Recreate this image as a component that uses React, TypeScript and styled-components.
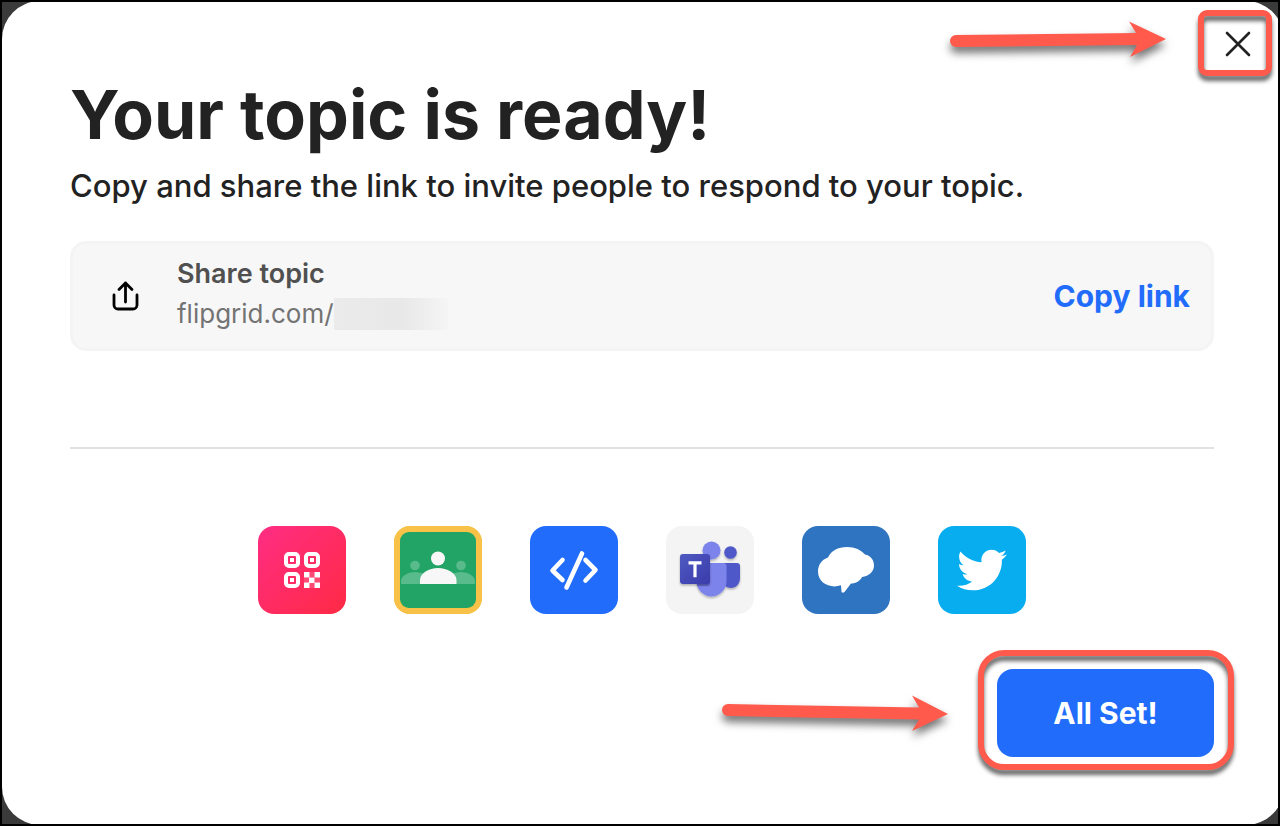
import React from "react";
import styled, { createGlobalStyle } from "styled-components";
import { FaTwitter } from "react-icons/fa";

const GlobalStyle = createGlobalStyle`
  *, *::before, *::after { box-sizing: border-box; }
  body {
    margin: 0;
    background: #000;
    color: #222;
    font-family: Inter, "Open Sans", sans-serif;
  }
  button { font-family: inherit; cursor: pointer; }
`;

const CORAL = "#ff5a4c";
const BLUE = "#216cfb";

const Frame = styled.div`
  display: flex;
  min-height: 100vh;
  overflow: hidden;
  border: 2px solid #000;
  background: #3a3a3a;
`;

const Dialog = styled.main`
  flex: 1;
  display: flex;
  flex-direction: column;
  margin: -1px -6px -1px 0;
  border-radius: 38px;
  background: #fff;
`;

const TopBar = styled.header`
  display: flex;
  justify-content: flex-end;
  align-items: flex-start;
  gap: 31px;
  padding: 9px 12px 0 0;
`;

const Callout = styled.div<{ $radius: number; $pad: string }>`
  position: relative;
  display: flex;
  padding: ${(p) => p.$pad};

  &::before {
    content: "";
    position: absolute;
    inset: 0;
    border: 6px solid ${CORAL};
    border-radius: ${(p) => p.$radius}px;
    filter: drop-shadow(0 5px 2px rgba(0, 0, 0, 0.6));
    pointer-events: none;
  }
`;

const ArrowSvg = styled.svg`
  flex: none;
  overflow: visible;
  filter: drop-shadow(0 6px 4px rgba(0, 0, 0, 0.55));
`;

const CloseButton = styled.button`
  display: grid;
  place-items: center;
  width: 48px;
  height: 48px;
  padding: 0;
  border: 0;
  background: transparent;
`;

const Intro = styled.section`
  padding: 0 70px 0 68px;
`;

const Title = styled.h1`
  margin: 0;
  font-size: 68px;
  line-height: 76px;
  font-weight: 700;
`;

const Subtitle = styled.p`
  margin: 14px 0 0;
  font-size: 31px;
  line-height: 40px;
  font-weight: 500;
`;

const ShareRow = styled.section`
  display: flex;
  align-items: center;
  min-height: 110px;
  margin: 35px 70px 0 68px;
  padding: 0 21px 0 38px;
  border: 3px solid #f4f4f4;
  border-radius: 16px;
  background: #f7f7f7;
`;

const ShareText = styled.div`
  flex: 1;
  margin-left: 36px;
  padding-bottom: 4px;
`;

const ShareTitle = styled.h2`
  margin: 0;
  font-size: 27px;
  line-height: 40px;
  font-weight: 600;
  color: #505050;
`;

const ShareUrl = styled.div`
  display: flex;
  align-items: center;
  font-size: 26px;
  line-height: 40px;
  color: #737373;
`;

const Redaction = styled.span`
  width: 114px;
  height: 32px;
  margin-left: -15px;
  background: linear-gradient(90deg, #ebebeb, #e8e8e8 60%, #f5f5f5);
`;

const CopyButton = styled.button`
  padding: 0;
  border: 0;
  background: transparent;
  color: ${BLUE};
  font-size: 30px;
  line-height: 40px;
  font-weight: 700;
`;

const Divider = styled.hr`
  align-self: stretch;
  height: 2px;
  margin: 96px 70px 0 68px;
  border: 0;
  background: #e1e1e1;
`;

const AppList = styled.nav`
  display: flex;
  flex-wrap: wrap;
  justify-content: center;
  gap: 48px;
  padding: 77px 70px 0 68px;
`;

const AppButton = styled.button<{ $bg: string }>`
  display: grid;
  place-items: center;
  width: 88px;
  height: 88px;
  padding: 0;
  border: 0;
  border-radius: 16px;
  background: ${(p) => p.$bg};
  color: #fff;
`;

const Footer = styled.footer`
  display: flex;
  justify-content: flex-end;
  align-items: flex-start;
  gap: 30px;
  padding: 36px 50px 48px;
`;

const DoneButton = styled.button`
  min-width: 217px;
  height: 88px;
  border: 0;
  border-radius: 16px;
  background: ${BLUE};
  color: #fff;
  font-size: 30px;
  font-weight: 700;
`;

function ArrowTop() {
  return (
    <ArrowSvg width="218" height="60" viewBox="0 0 218 60" aria-hidden="true">
      <path
        fill={CORAL}
        d="M7 25 L187 23 L180 11.500 L217 29 L181 47 L188 35 L7 37 A6 6 0 0 1 7 25Z"
      />
    </ArrowSvg>
  );
}

function ArrowBottom() {
  return (
    <ArrowSvg width="227" height="90" viewBox="0 0 227 90" aria-hidden="true">
      <path
        fill={CORAL}
        d="M7 54 L198 57.500 L191 45.500 L227 64 L191 81 L198 69.500 L7 66 A6 6 0 0 1 7 54Z"
      />
    </ArrowSvg>
  );
}

function ShareIcon() {
  return (
    <svg width="30" height="34" viewBox="0 0 30 34" fill="none" stroke="#000" strokeWidth="2.800" strokeLinecap="round" strokeLinejoin="round" aria-hidden="true">
      <path d="M3 16v10a4 4 0 0 0 4 4h15a4 4 0 0 0 4-4V16M14.500 23V4M8 10.500 14.500 4l6.500 6.500" />
    </svg>
  );
}

function QrIcon() {
  const rings = [[2, 2], [22, 2], [2, 22]];
  const cells = [[20, 20], [30.500, 20], [25, 25.500], [20, 30.500], [30.500, 30.500]];
  return (
    <svg width="36" height="36" viewBox="0 0 36 36" fill="none" aria-hidden="true">
      {rings.map(([x, y]) => (
        <rect key={`${x}-${y}`} x={x} y={y} width="12" height="12" rx="3" stroke="#fff" strokeWidth="4" />
      ))}
      {rings.map(([x, y]) => (
        <rect key={`${x}-${y}-dot`} x={x + 4} y={y + 4} width="4" height="4" fill="#fff" />
      ))}
      {cells.map(([x, y]) => (
        <rect key={`${x}-${y}-cell`} x={x} y={y} width="5.500" height="5.500" fill="#fff" />
      ))}
      <path d="M25.500 20h5v5.500h-5zM20 25.500h5v5h-5zM30.500 25.500H36v5h-5.500zM25.500 30.500h5V36h-5z" fill="#fff" opacity=".15" />
    </svg>
  );
}

function ClassroomIcon() {
  return (
    <svg width="88" height="88" viewBox="0 0 88 88" aria-hidden="true">
      <rect width="88" height="88" rx="16" fill="#f8c248" />
      <rect x="6" y="6" width="76" height="76" rx="9" fill="#21a465" />
      <g fill="#59bb8b">
        <circle cx="21" cy="39.500" r="4.800" />
        <circle cx="67" cy="39.500" r="4.800" />
        <path d="M7 58v-3c0-5 7-9 14-9s14 4 14 9v3zM53 58v-3c0-5 7-9 14-9s14 4 14 9v3z" />
      </g>
      <g fill="#f7f7f7">
        <circle cx="44" cy="32.500" r="7" />
        <path d="M26 58v-4c0-7 9-12 18-12s18.500 5 18.500 12v4z" />
      </g>
    </svg>
  );
}

function CodeIcon() {
  return (
    <svg width="88" height="88" viewBox="0 0 88 88" fill="none" stroke="#fff" strokeWidth="4.600" strokeLinecap="round" strokeLinejoin="round" aria-hidden="true">
      <path d="M32.500 34 22.500 44.500l10 9.500M55.500 34l10 10-10 10.500M52 27.500 36.500 61.500" />
    </svg>
  );
}

function TeamsIcon() {
  return (
    <svg width="88" height="88" viewBox="0 0 88 88" aria-hidden="true">
      <defs>
        <linearGradient id="teams-tile" x1="0" y1="0" x2="1" y2="1">
          <stop offset="0" stopColor="#5059c1" />
          <stop offset="1" stopColor="#393bab" />
        </linearGradient>
        <filter id="teams-shadow" x="-20%" y="-20%" width="140%" height="150%">
          <feDropShadow dx="0" dy="1.500" stdDeviation="1.200" floodOpacity=".3" />
        </filter>
      </defs>
      <g filter="url(#teams-shadow)">
        <circle cx="64.500" cy="26.500" r="6.300" fill="#5059c9" />
        <path d="M58 37h13a3 3 0 0 1 3 3v12c0 6-4 10-9 10s-8-3-9-8z" fill="#5059c9" />
        <circle cx="45.500" cy="24.500" r="9" fill="#7b83eb" />
        <path d="M32 37h26a3 3 0 0 1 2.500 3v15.500c0 8-7 15-15 15s-15-7-15-15V40z" fill="#7b83eb" />
      </g>
      <path d="M33 33h11v24a3 3 0 0 1-3 3H31z" fill="#4a50b8" opacity=".45" />
      <g filter="url(#teams-shadow)">
        <rect x="14" y="28" width="30" height="30" rx="3" fill="url(#teams-tile)" />
      </g>
      <path d="M22.500 36.800h13M29 36.800v14.500" fill="none" stroke="#fff" strokeWidth="3.200" />
    </svg>
  );
}

function BubbleIcon() {
  return (
    <svg width="88" height="88" viewBox="0 0 88 88" fill="#fff" aria-hidden="true">
      <path d="M26 31.500C29 25 36 21 45 21c8 0 14 3 18 7.500 5.500 1 9 5.500 9 11 0 6-5 10.500-12 11.500-2 4-6 6.500-11 6.500l-6.500 8.500c-1 1-3 1-3-.5L39 59.300C28 63 16 57 16 45.500c0-7 4-12 10-14z" />
    </svg>
  );
}

const apps = [
  { label: "QR code", bg: "linear-gradient(135deg, #ff2d84, #ff2a44)", icon: <QrIcon /> },
  { label: "Google Classroom", bg: "#f8c248", icon: <ClassroomIcon /> },
  { label: "Embed code", bg: BLUE, icon: <CodeIcon /> },
  { label: "Microsoft Teams", bg: "#f4f4f4", icon: <TeamsIcon /> },
  { label: "Remind", bg: "#2f74c0", icon: <BubbleIcon /> },
  { label: "Twitter", bg: "#08adef", icon: <FaTwitter size={50} aria-hidden="true" /> },
];

export default function App() {
  return (
    <>
      <GlobalStyle />
      <Frame>
        <Dialog>
          <TopBar>
            <ArrowTop />
            <Callout $radius={9} $pad="10px 10px 8px 16px">
              <CloseButton type="button" aria-label="Close">
                <svg width="28" height="28" viewBox="0 0 28 28" fill="none" stroke="#222" strokeWidth="2.600" strokeLinecap="round" aria-hidden="true">
                  <path d="M3 3l22 22M25 3 3 25" />
                </svg>
              </CloseButton>
            </Callout>
          </TopBar>
          <Intro>
            <Title>Your topic is ready!</Title>
            <Subtitle>Copy and share the link to invite people to respond to your topic.</Subtitle>
          </Intro>
          <ShareRow>
            <ShareIcon />
            <ShareText>
              <ShareTitle>Share topic</ShareTitle>
              <ShareUrl>
                <span>flipgrid.com/2</span>
                <Redaction />
              </ShareUrl>
            </ShareText>
            <CopyButton type="button">Copy link</CopyButton>
          </ShareRow>
          <Divider />
          <AppList aria-label="Share with">
            {apps.map((app) => (
              <AppButton key={app.label} type="button" aria-label={app.label} $bg={app.bg}>
                {app.icon}
              </AppButton>
            ))}
          </AppList>
          <Footer>
            <ArrowBottom />
            <Callout $radius={26} $pad="19px 20px 13px 19px">
              <DoneButton type="button">All Set!</DoneButton>
            </Callout>
          </Footer>
        </Dialog>
      </Frame>
    </>
  );
}
